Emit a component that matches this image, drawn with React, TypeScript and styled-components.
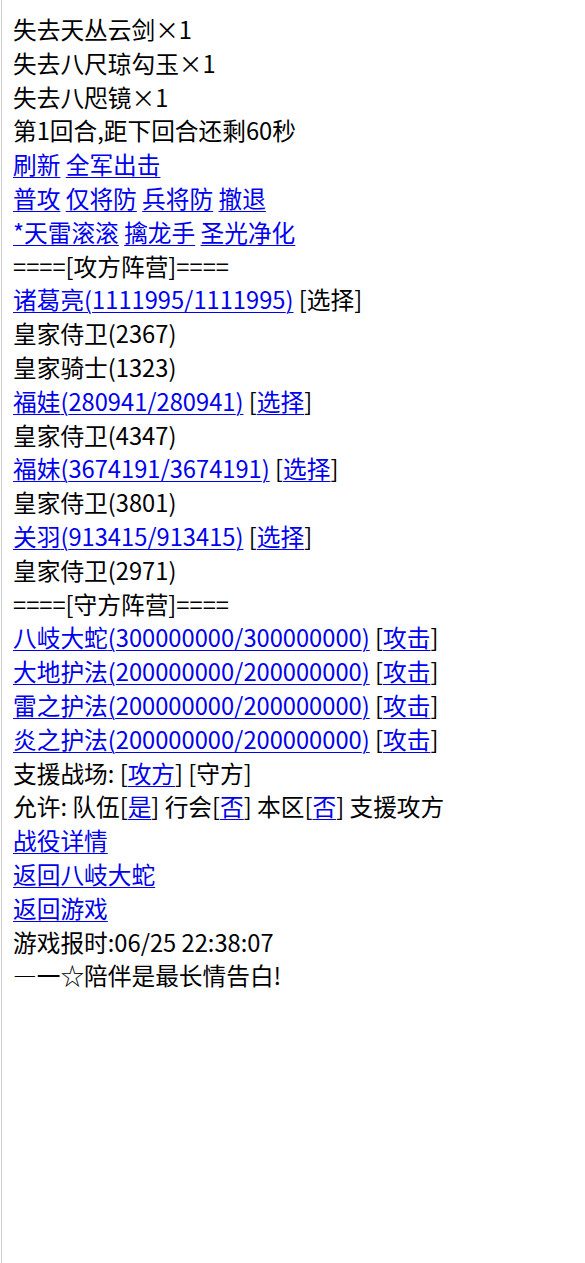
import React from "react"
import styled, { createGlobalStyle } from "styled-components"

const GlobalStyle = createGlobalStyle`
  html, body {
    margin: 0;
    padding: 0;
    background: #ffffff;
  }
`

const Page = styled.div`
  box-sizing: border-box;
  min-height: 100vh;
  margin-left: 1px;
  border-left: 1px solid #cfcfcf;
  padding: 13px 10px 0 11px;
  font-family: "Noto Sans CJK SC", "Noto Sans", sans-serif;
  font-size: 23.7px;
  line-height: 33.8px;
  color: #000000;
`

const Line = styled.div`
  white-space: nowrap;
`

const Link = styled.a`
  color: #0000ee;
  text-decoration: underline;
  text-underline-offset: 3px;
  text-decoration-thickness: 1px;
`

type Unit = { name: string; hp?: string; guard?: boolean; pick?: "text" | "link" }

const attackers: Unit[] = [
  { name: "诸葛亮", hp: "1111995/1111995", pick: "text" },
  { name: "皇家侍卫", hp: "2367", guard: true },
  { name: "皇家骑士", hp: "1323", guard: true },
  { name: "福娃", hp: "280941/280941", pick: "link" },
  { name: "皇家侍卫", hp: "4347", guard: true },
  { name: "福妹", hp: "3674191/3674191", pick: "link" },
  { name: "皇家侍卫", hp: "3801", guard: true },
  { name: "关羽", hp: "913415/913415", pick: "link" },
  { name: "皇家侍卫", hp: "2971", guard: true },
]

const defenders = [
  { name: "八岐大蛇", hp: "300000000/300000000" },
  { name: "大地护法", hp: "200000000/200000000" },
  { name: "雷之护法", hp: "200000000/200000000" },
  { name: "炎之护法", hp: "200000000/200000000" },
]

const LinkRow = ({ items }: { items: string[] }) => (
  <Line>
    {items.map((t, i) => (
      <React.Fragment key={t}>
        {i > 0 && " "}
        <Link href="#">{t}</Link>
      </React.Fragment>
    ))}
  </Line>
)

export default function App() {
  return (
    <>
      <GlobalStyle />
      <Page>
        <Line>失去天丛云剑×1</Line>
        <Line>失去八尺琼勾玉×1</Line>
        <Line>失去八咫镜×1</Line>
        <Line>第1回合,距下回合还剩60秒</Line>
        <LinkRow items={["刷新", "全军出击"]} />
        <LinkRow items={["普攻", "仅将防", "兵将防", "撤退"]} />
        <LinkRow items={["*天雷滚滚", "擒龙手", "圣光净化"]} />
        <Line>====[攻方阵营]====</Line>
        {attackers.map((u, i) =>
          u.guard ? (
            <Line key={i}>
              {u.name}({u.hp})
            </Line>
          ) : (
            <Line key={i}>
              <Link href="#">
                {u.name}({u.hp})
              </Link>{" "}
              {u.pick === "text" ? (
                "[选择]"
              ) : (
                <>
                  [<Link href="#">选择</Link>]
                </>
              )}
            </Line>
          )
        )}
        <Line>====[守方阵营]====</Line>
        {defenders.map((d) => (
          <Line key={d.name}>
            <Link href="#">
              {d.name}({d.hp})
            </Link>{" "}
            [<Link href="#">攻击</Link>]
          </Line>
        ))}
        <Line>
          支援战场: [<Link href="#">攻方</Link>] [守方]
        </Line>
        <Line>
          允许: 队伍[<Link href="#">是</Link>] 行会[<Link href="#">否</Link>] 本区[
          <Link href="#">否</Link>] 支援攻方
        </Line>
        <Line>
          <Link href="#">战役详情</Link>
        </Line>
        <Line>
          <Link href="#">返回八岐大蛇</Link>
        </Line>
        <Line>
          <Link href="#">返回游戏</Link>
        </Line>
        <Line>游戏报时:06/25 22:38:07</Line>
        <Line>―一☆陪伴是最长情告白!</Line>
      </Page>
    </>
  )
}
